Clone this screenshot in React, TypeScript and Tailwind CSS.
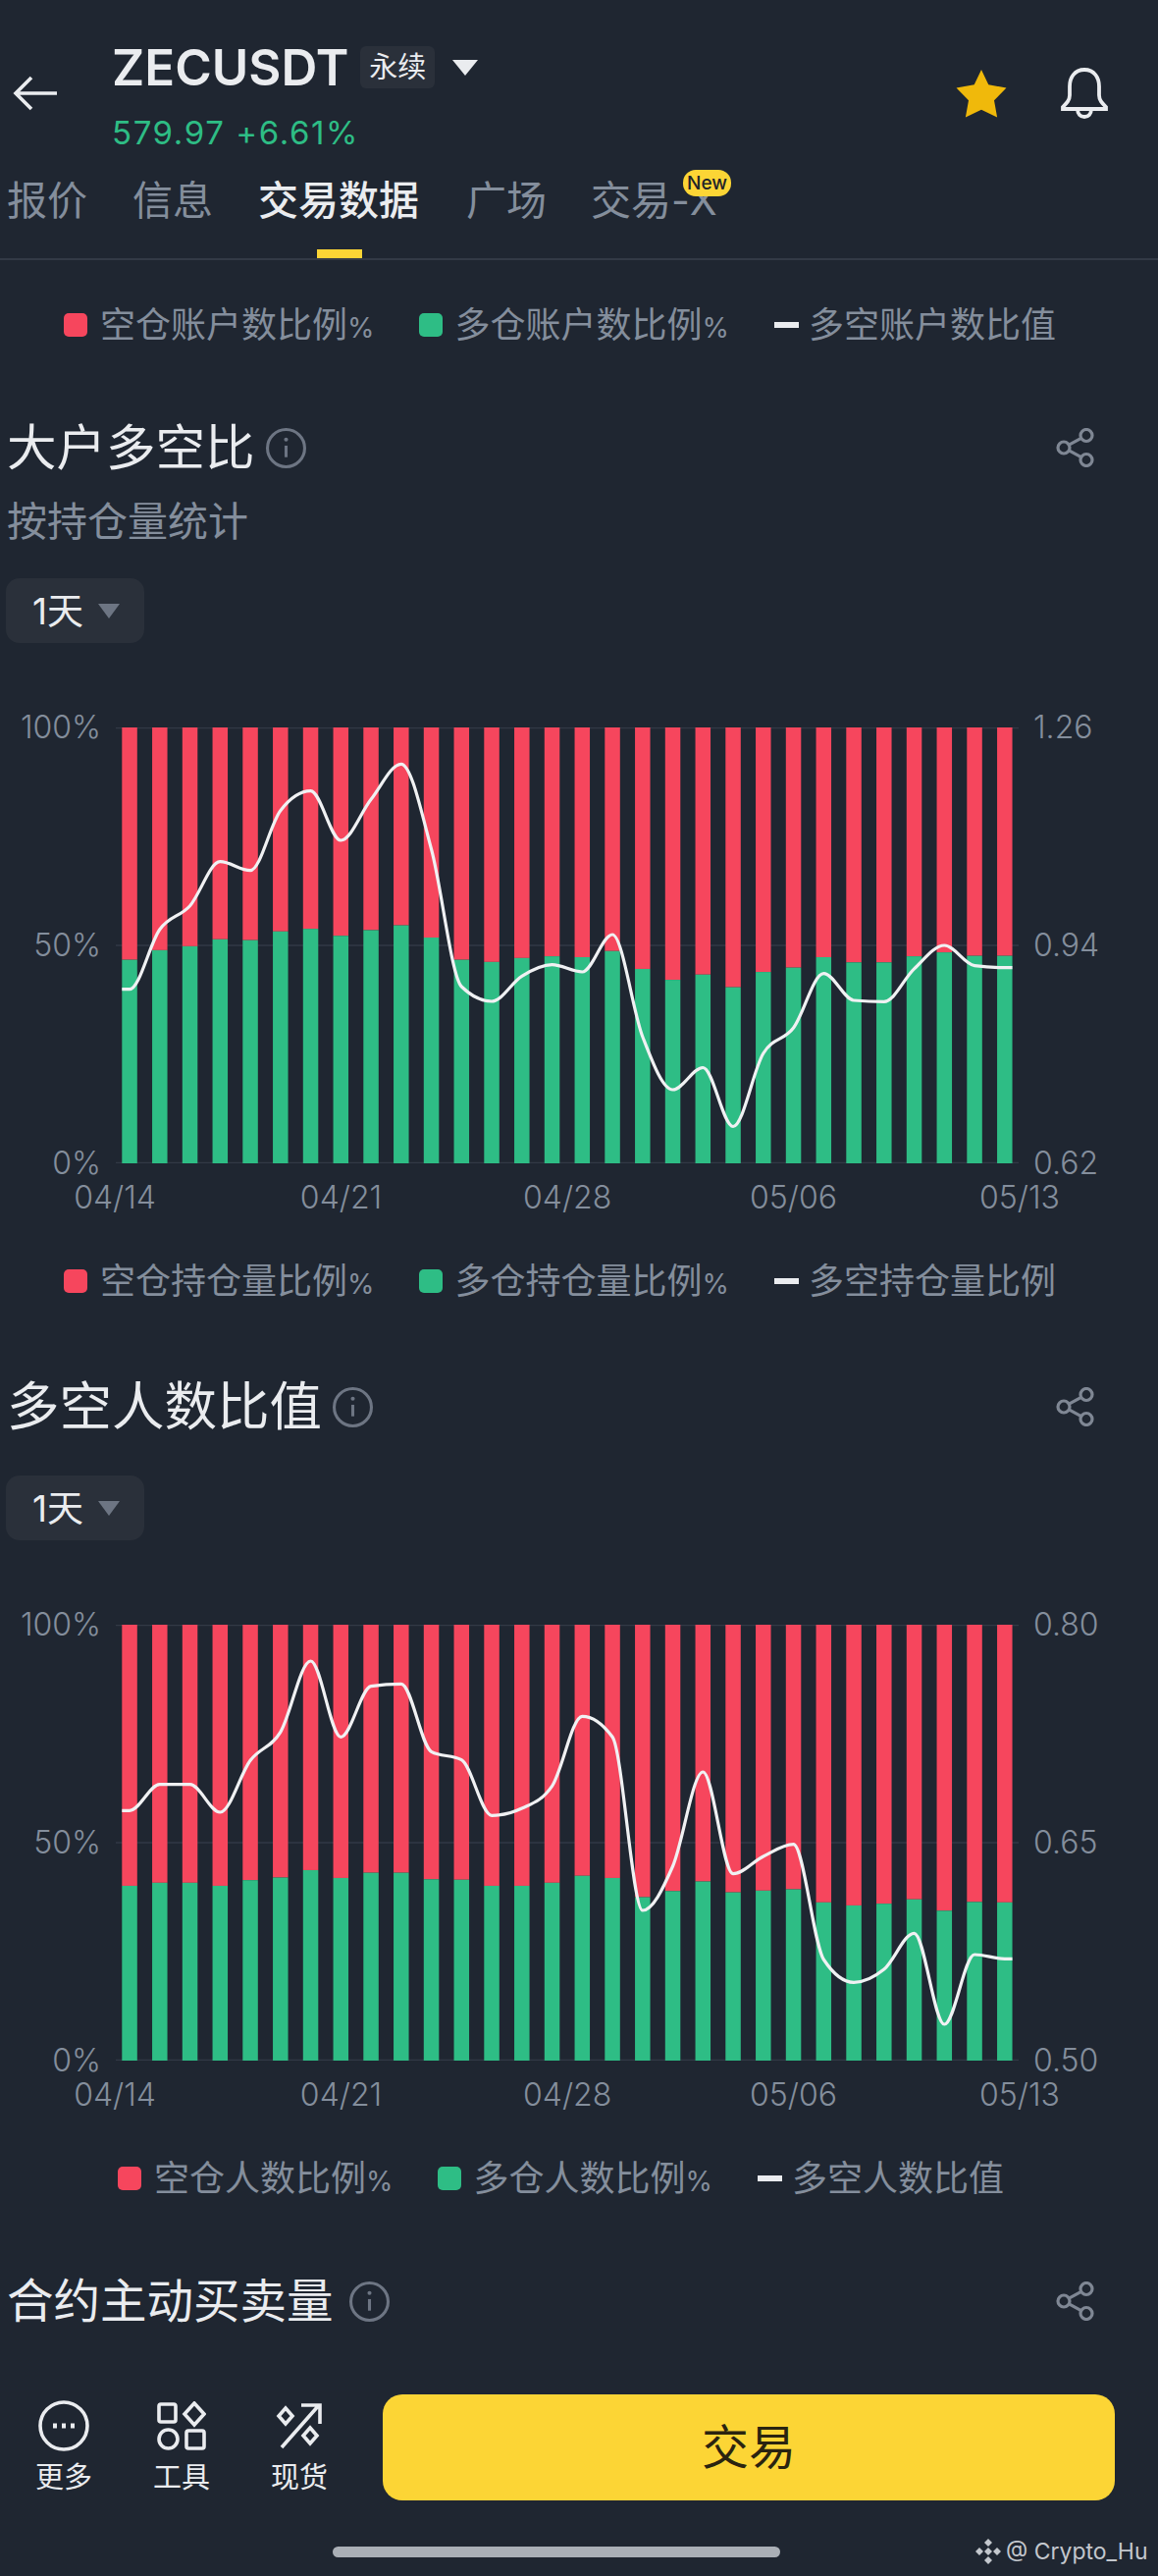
const barLeft = 6.3;
const barPitch = 30.75;
const barWidth = 15.5;

// green share of each daily bar, line position in px from the chart top
const whaleBars = [46.7, 48.9, 49.8, 51.4, 51.2, 53.2, 53.8, 52.2, 53.5, 54.6, 51.8, 46.7, 46.2, 47.1, 47.5, 47.3, 48.7, 44.6, 42.1, 43.3, 40.4, 43.9, 44.9, 47.3, 46.1, 46.1, 47.5, 48.4, 47.6, 47.6];
const whaleLine = [266.7, 205.7, 181.7, 136.7, 145.7, 84.7, 64.7, 115, 73.3, 37.3, 124, 264, 279, 253.3, 241.7, 249, 211, 315, 369, 346.5, 406.5, 332, 306, 250.6, 278, 279.4, 245.9, 222, 242.7, 244.7];
const peopleBars = [40.1, 40.8, 40.8, 40.1, 41.4, 42, 43.7, 41.9, 43.1, 43.1, 41.6, 41.5, 40.1, 40.1, 40.8, 42.4, 41.9, 37.5, 38.9, 41.1, 38.6, 39, 39.3, 36.3, 35.6, 36, 37, 34.4, 36.4, 36.3];
const peopleLine = [189.3, 162.7, 162.7, 191, 138.3, 109.3, 37, 114.3, 62.7, 60.3, 129.3, 137.7, 194.3, 187, 164.3, 93.3, 114.3, 291, 246, 150, 253.7, 236, 223.7, 341, 364.3, 351, 314.3, 407, 336, 340.3];

// same idea as d3 curveMonotoneX
function monotonePath(values: number[]) {
  const pts: [number, number][] = [
    [barLeft, values[0]],
    ...values.map((y, i): [number, number] => [barLeft + barWidth / 2 + i * barPitch, y]),
    [barLeft + barWidth + (values.length - 1) * barPitch, values[values.length - 1]],
  ];
  const tangents = pts.map((p, i) => {
    if (i === 0 || i === pts.length - 1) return 0;
    const h0 = p[0] - pts[i - 1][0];
    const h1 = pts[i + 1][0] - p[0];
    const s0 = (p[1] - pts[i - 1][1]) / h0;
    const s1 = (pts[i + 1][1] - p[1]) / h1;
    const m = (s0 * h1 + s1 * h0) / (h0 + h1);
    return (Math.sign(s0) + Math.sign(s1)) * Math.min(Math.abs(s0), Math.abs(s1), 0.5 * Math.abs(m));
  });
  let d = `M${pts[0][0]} ${pts[0][1]}`;
  for (let i = 1; i < pts.length; i++) {
    const dx = (pts[i][0] - pts[i - 1][0]) / 3;
    d += ` C${pts[i - 1][0] + dx} ${pts[i - 1][1] + dx * tangents[i - 1]} ${pts[i][0] - dx} ${pts[i][1] - dx * tangents[i]} ${pts[i][0]} ${pts[i][1]}`;
  }
  return d;
}

function InfoIcon({ className }: { className: string }) {
  return (
    <svg viewBox="0 0 40 40" className={className} fill="none" stroke="#6d7583">
      <circle cx="20" cy="20" r="18.5" strokeWidth="3" />
      <path d="M20 17.5V29" strokeWidth="3" />
      <circle cx="20" cy="11.5" r="2" fill="#6d7583" stroke="none" />
    </svg>
  );
}

function ShareIcon() {
  return (
    <svg viewBox="0 0 40 40" className="w-[40px] h-[40px]" fill="none" stroke="#7f8794" strokeWidth="3.2">
      <circle cx="8" cy="20" r="6" />
      <circle cx="31" cy="7.5" r="6" />
      <circle cx="31" cy="32.5" r="6" />
      <path d="M13.3 17.1L25.7 10.4M13.3 22.9L25.7 29.6" />
    </svg>
  );
}

function Title({ text, size, gap }: { text: string; size: string; gap: string }) {
  return (
    <div className="flex items-center justify-between h-[50px] pl-[7px] pr-[64px]">
      <div className="flex items-center">
        <span className={`${size} leading-[50px] text-[#eaecef] font-normal whitespace-nowrap`}>{text}</span>
        <InfoIcon className={`${gap} w-[41px] h-[41px]`} />
      </div>
      <ShareIcon />
    </div>
  );
}

function Chip() {
  return (
    <div className="flex items-center w-[141px] h-[66px] ml-[6px] rounded-[14px] bg-[#2a303a]">
      <span className="ml-[27px] text-[37px] leading-none text-[#eaecef]">1天</span>
      <span className="ml-[15px] w-0 h-0 border-x-[11px] border-x-transparent border-t-[15px] border-t-[#6d7583]" />
    </div>
  );
}

function Chart({ bars, line, right }: { bars: number[]; line: number[]; right: string[] }) {
  return (
    <div>
      <div className="flex h-[480px] text-[32px] leading-[36px] font-light text-[#848e9c]">
        <div className="flex flex-col justify-between w-[103px] text-right">
          <span>100%</span>
          <span>50%</span>
          <span>0%</span>
        </div>
        <svg viewBox="0 0 920 444" className="w-[920px] h-[444px] mt-[18px] ml-[15px]">
          <path d="M0 .5H920M0 222H920M0 443.5H920" stroke="#323946" strokeWidth="1.5" />
          {bars.map((pct, i) => {
            const x = barLeft + i * barPitch;
            const h = (pct / 100) * 444;
            return (
              <g key={i}>
                <rect x={x} y={0} width={barWidth} height={444 - h} fill="#f6465d" />
                <rect x={x} y={444 - h} width={barWidth} height={h} fill="#2ebd85" />
              </g>
            );
          })}
          <path d={monotonePath(line)} fill="none" stroke="#f0f1f3" strokeWidth="3.2" />
        </svg>
        <div className="flex flex-col justify-between ml-[15px]">
          {right.map((v) => (
            <span key={v}>{v}</span>
          ))}
        </div>
      </div>
      <div className="flex justify-between w-[1084px] pl-[72px] mt-[-1px] text-[32px] leading-[36px] font-light text-[#848e9c]">
        {['04/14', '04/21', '04/28', '05/06', '05/13'].map((d) => (
          <span key={d} className="w-[90px] text-center">
            {d}
          </span>
        ))}
      </div>
    </div>
  );
}

function LegendText({ text }: { text: string }) {
  return (
    <span className="ml-[13px]">
      {text.slice(0, -1)}
      <span className="text-[28px]">%</span>
    </span>
  );
}

function Legend({ items, offset }: { items: string[]; offset: string }) {
  return (
    <div className="flex items-center h-[40px] text-[36px] leading-none text-[#848e9c] whitespace-nowrap">
      <span className={`${offset} w-[24px] h-[24px] rounded-[5px] bg-[#f6465d]`} />
      <LegendText text={items[0]} />
      <span className="ml-[45px] w-[24px] h-[24px] rounded-[5px] bg-[#2ebd85]" />
      <LegendText text={items[1]} />
      <span className="ml-[46px] w-[25px] h-[6px] bg-[#eaecef]" />
      <span className="ml-[10px]">{items[2]}</span>
    </div>
  );
}

function ToolButton({ label, children }: { label: string; children: React.ReactNode }) {
  return (
    <div className="flex flex-col items-center w-[60px] mt-[6px]">
      <div className="flex items-center justify-center h-[52px]">{children}</div>
      <span className="mt-[12px] text-[29px] leading-[30px] text-[#eaecef] whitespace-nowrap">{label}</span>
    </div>
  );
}

export default function App() {
  return (
    <div className="w-[1180px] h-[2624px] overflow-hidden bg-[#1f2631] font-['Inter','Noto_Sans_CJK_SC',sans-serif]">
      {/* Header */}
      <div className="flex items-start h-[173px]">
        <svg viewBox="0 0 46 36" className="w-[46px] h-[36px] ml-[13px] mt-[77px]" fill="none" stroke="#eaecef" strokeWidth="3.6">
          <path d="M45 18H3M19 2L3 18L19 34" />
        </svg>
        <div className="ml-[55px] mt-[47px]">
          <div className="flex items-center h-[43px]">
            <span className="text-[51px] leading-none font-semibold text-[#eaecef]">ZECUSDT</span>
            <span className="ml-[12px] flex items-center justify-center w-[76px] h-[43px] rounded-[6px] bg-[#2a303a] text-[29px] text-[#eaecef]">永续</span>
            <span className="ml-[18px] w-0 h-0 border-x-[13px] border-x-transparent border-t-[16px] border-t-[#eaecef]" />
          </div>
          <div className="mt-[27px] text-[33px] leading-[36px] tracking-[1.6px] text-[#2ebd85]">579.97 +6.61%</div>
        </div>
        <svg viewBox="0 0 50 48" className="absolute left-[974px] top-[70px] w-[52px] h-[50px]" fill="#f0b90b">
          <path d="M25 1L32 15.5L49.5 18.8L37.5 31L40.5 47.5L25 40L9.5 47.5L12.5 31L.5 18.8L18 15.5Z" />
        </svg>
        <svg viewBox="0 0 50 52" className="absolute left-[1080px] top-[69px] w-[50px] h-[52px]" fill="none" stroke="#eaecef" strokeWidth="3.8">
          <path d="M25 2C15 2 10 10 10 19V28C10 33 7 36 3 40V42H47V40C43 36 40 33 40 28V19C40 10 35 2 25 2Z" />
          <path d="M18 42C18 47 21 50 25 50C29 50 32 47 32 42" />
        </svg>
      </div>

      {/* Tabs */}
      <div className="relative h-[92px] border-b-[2px] border-[#333a46] text-[41px] leading-[60px] text-[#848e9c]">
        <div className="flex pl-[7px] pt-[1px] whitespace-nowrap">
          <span>报价</span>
          <span className="ml-[46px]">信息</span>
          <span className="ml-[46px] font-medium text-[#eaecef]">交易数据</span>
          <span className="ml-[48px]">广场</span>
          <span className="ml-[45px]">交易-X</span>
        </div>
        <span className="absolute left-[323px] bottom-0 w-[46px] h-[9px] bg-[#fcd535]" />
        <span className="absolute left-[696px] top-0 flex items-center justify-center w-[49px] h-[27px] rounded-[13px] bg-[#fcd535] text-[19px] leading-none font-medium text-[#1e2329]">New</span>
      </div>

      <div className="mt-[46px]">
        <Legend items={['空仓账户数比例%', '多仓账户数比例%', '多空账户数比值']} offset="ml-[65px]" />
      </div>

      <div className="mt-[80px]">
        <Title text="大户多空比" size="text-[50.5px]" gap="ml-[11px]" />
      </div>
      <div className="mt-[25px] pl-[7px] text-[41px] leading-[50px] text-[#848e9c]">按持仓量统计</div>
      <div className="mt-[33px]">
        <Chip />
      </div>

      <div className="mt-[68px]">
        <Chart bars={whaleBars} line={whaleLine} right={['1.26', '0.94', '0.62']} />
      </div>

      <div className="mt-[47px]">
        <Legend items={['空仓持仓量比例%', '多仓持仓量比例%', '多空持仓量比例']} offset="ml-[65px]" />
      </div>

      <div className="mt-[83px]">
        <Title text="多空人数比值" size="text-[53.5px]" gap="ml-[11px]" />
      </div>
      <div className="mt-[45px]">
        <Chip />
      </div>

      <div className="mt-[68px]">
        <Chart bars={peopleBars} line={peopleLine} right={['0.80', '0.65', '0.50']} />
      </div>

      <div className="mt-[47px]">
        <Legend items={['空仓人数比例%', '多仓人数比例%', '多空人数比值']} offset="ml-[120px]" />
      </div>

      <div className="mt-[80px]">
        <Title text="合约主动买卖量" size="text-[47.5px]" gap="ml-[16px]" />
      </div>

      {/* Bottom bar */}
      <div className="flex items-start mt-[70px] h-[108px]">
        <div className="flex gap-[60px] ml-[35px]">
          <ToolButton label="更多">
            <svg viewBox="0 0 52 52" className="w-[52px] h-[52px]" fill="none" stroke="#eaecef" strokeWidth="3.6">
              <circle cx="26" cy="26" r="24" />
              <path d="M15 26h4M24 26h4M33 26h4" strokeWidth="5" />
            </svg>
          </ToolButton>
          <ToolButton label="工具">
            <svg viewBox="0 0 50 50" className="w-[50px] h-[50px]" fill="none" stroke="#eaecef" strokeWidth="3.6">
              <rect x="2" y="3" width="17" height="18" rx="2" />
              <path d="M38 2L48 13L38 24L28 13Z" />
              <rect x="2" y="29" width="19" height="19" rx="9.5" />
              <rect x="30" y="30" width="18" height="18" rx="2" />
            </svg>
          </ToolButton>
          <ToolButton label="现货">
            <svg viewBox="0 0 48 48" className="w-[48px] h-[48px]" fill="none" stroke="#eaecef" strokeWidth="3.6">
              <path d="M10 6L17 14L10 22L3 14Z" />
              <path d="M6 46L44 3M26 3H45V22" />
              <path d="M35 26L42 34L35 42L28 34Z" />
            </svg>
          </ToolButton>
        </div>
        <div className="flex items-center justify-center w-[746px] h-[108px] ml-[55px] rounded-[20px] bg-[#fcd535] text-[48px] text-[#2a2410]">
          交易
        </div>
      </div>

      {/* Home indicator + watermark */}
      <div className="relative mt-[47px]">
        <div className="w-[456px] h-[11px] ml-[339px] rounded-full bg-[#aaafb6]" />
        <div className="absolute left-[993px] top-[-9px] flex items-center text-[23px] leading-none text-[#c3c7cd] whitespace-nowrap">
          <svg viewBox="0 0 28 28" className="w-[28px] h-[28px] mr-[4px]" fill="#c3c7cd">
            <path d="M14 1L18 5L14 9L10 5ZM5 10L9 14L5 18L1 14ZM23 10L27 14L23 18L19 14ZM14 10L18 14L14 18L10 14ZM14 19L18 23L14 27L10 23Z" />
          </svg>
          @ Crypto_Hu
        </div>
      </div>
    </div>
  );
}
